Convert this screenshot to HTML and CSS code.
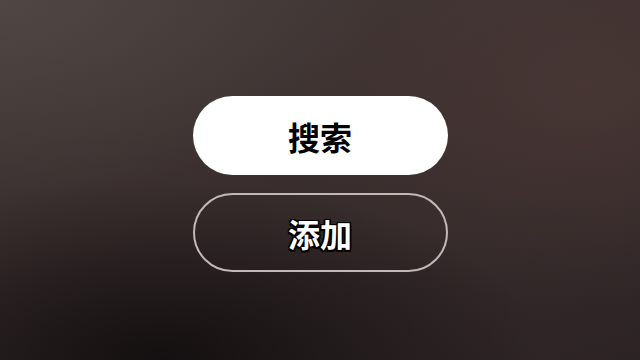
FILE: index.html
```html
<!DOCTYPE html>
<html lang="zh">
<head>
  <meta charset="UTF-8">
  <meta name="viewport" content="width=device-width, initial-scale=1.0">
  <title>搜索</title>
  <link rel="stylesheet" href="styles.css">
</head>
<body>
  <div class="actions">
    <button class="btn btn-primary">搜索</button>
    <button class="btn btn-outline">添加</button>
  </div>
</body>
</html>
```

FILE: styles.css
```css
html, body {
  margin: 0;
  height: 100%;
}

body {
  font-family: "Noto Sans CJK SC", "Noto Sans", sans-serif;
  background:
    radial-gradient(ellipse 60% 55% at 0% 0%, rgba(80, 72, 68, 0.9), rgba(80, 72, 68, 0) 100%),
    radial-gradient(ellipse 50% 60% at 92% 25%, rgba(74, 56, 54, 0.8), rgba(74, 56, 54, 0) 100%),
    radial-gradient(ellipse 60% 50% at 25% 100%, rgba(20, 15, 16, 1), rgba(20, 15, 16, 0) 100%),
    linear-gradient(160deg, #433a38 0%, #3a2f2e 45%, #2c2324 100%);
  overflow: hidden;
}

.actions {
  height: 100%;
  box-sizing: border-box;
  padding-top: 8px;
  display: flex;
  flex-direction: column;
  align-items: center;
  justify-content: center;
  gap: 18px;
}

.btn {
  width: 255px;
  height: 79px;
  border-radius: 40px;
  font-family: inherit;
  font-size: 32px;
  font-weight: 700;
  cursor: pointer;
  box-sizing: border-box;
}

.btn-primary {
  background: #fff;
  border: none;
  color: #000;
}

.btn-outline {
  background: transparent;
  border: 2px solid #c4b7b7;
  color: #fff;
  text-shadow:
    -1.5px -1.5px 0 #000, 1.5px -1.5px 0 #000,
    -1.5px 1.5px 0 #000, 1.5px 1.5px 0 #000,
    0 -1.5px 0 #000, 0 1.5px 0 #000,
    -1.5px 0 0 #000, 1.5px 0 0 #000;
}
```
